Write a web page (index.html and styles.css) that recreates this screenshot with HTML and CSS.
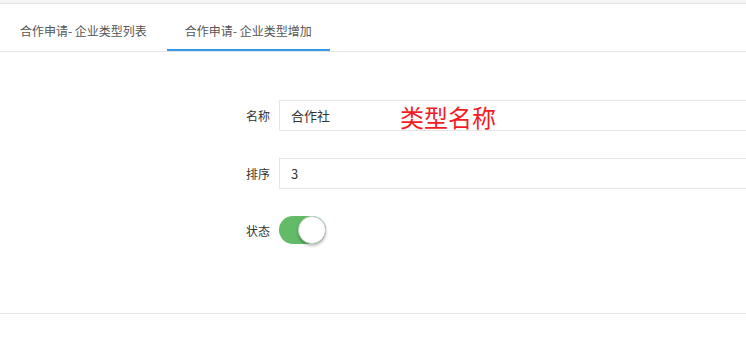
FILE: index.html
```html
<!DOCTYPE html>
<html lang="zh-CN">
<head>
    <meta charset="UTF-8">
    <meta name="viewport" content="width=device-width, initial-scale=1.0">
    <title>企业类型增加</title>
    <link rel="stylesheet" href="styles.css">
</head>
<body>
    <div class="topbar"></div>

    <!-- Tabs -->
    <ul class="tabs">
        <li class="tab">合作申请- 企业类型列表</li>
        <li class="tab active">合作申请- 企业类型增加</li>
    </ul>

    <!-- Form -->
    <div class="form">
        <div class="form-row">
            <label class="form-label">名称</label>
            <input class="form-input" type="text" value="合作社">
            <span class="note">类型名称</span>
        </div>
        <div class="form-row">
            <label class="form-label">排序</label>
            <input class="form-input" type="text" value="3">
        </div>
        <div class="form-row switch-row">
            <label class="form-label">状态</label>
            <div class="switch on"><span class="knob"></span></div>
        </div>
    </div>
</body>
</html>
```

FILE: styles.css
```css
body {
    margin: 0;
    padding: 0;
    font-family: "Noto Sans CJK SC", "Liberation Sans", sans-serif;
    font-size: 12px;
    color: #333;
    background-color: #fff;
    overflow: hidden;
}

.topbar {
    height: 3px;
    background-color: #f4f4f4;
    border-bottom: 1px solid #e6e6e6;
}

/* Tabs */
.tabs {
    list-style: none;
    margin: 0;
    padding: 11px 0 0 2px;
    display: flex;
    border-bottom: 1px solid #e6e6e6;
}

.tab {
    height: 34px;
    line-height: 32px;
    padding: 0 18px;
    margin-right: 2px;
    color: #555;
    border-bottom: 2px solid transparent;
}

.tab.active {
    border-bottom-color: #3399ee;
}

/* Form */
.form {
    padding: 48px 0 66px 0;
    border-bottom: 1px solid #e6e6e6;
    overflow: hidden;
}

.form-row {
    position: relative;
    display: flex;
    align-items: center;
    height: 31px;
    margin-bottom: 27px;
}

.form-row:last-child {
    margin-bottom: 0;
}

.form-label {
    width: 270px;
    margin-right: 9px;
    text-align: right;
    flex-shrink: 0;
}

.form-input {
    flex: 1;
    min-width: 0;
    height: 31px;
    box-sizing: border-box;
    margin-right: -10px;
    padding: 0 11px;
    border: 1px solid #e6e6e6;
    font-family: "Noto Sans CJK SC", "Liberation Sans", sans-serif;
    font-size: 13px;
    color: #333;
    outline: none;
}

.note {
    position: absolute;
    left: 400px;
    top: 3px;
    font-size: 24px;
    line-height: 28px;
    color: #f41c24;
}

/* Switch */
.switch-row {
    align-items: flex-start;
}

.switch-row .form-label {
    line-height: 30px;
}

.switch {
    width: 47px;
    height: 28px;
    border-radius: 14px;
    background-color: #e6e6e6;
    position: relative;
}

.switch.on {
    background-color: #62bb67;
}

.switch .knob {
    position: absolute;
    top: 0;
    left: 0;
    width: 26px;
    height: 26px;
    border-radius: 50%;
    background-color: #fff;
    border: 1px solid #cfcfcf;
    box-shadow: 0 2px 3px rgba(0, 0, 0, 0.25);
}

.switch.on .knob {
    left: 19px;
}
```
